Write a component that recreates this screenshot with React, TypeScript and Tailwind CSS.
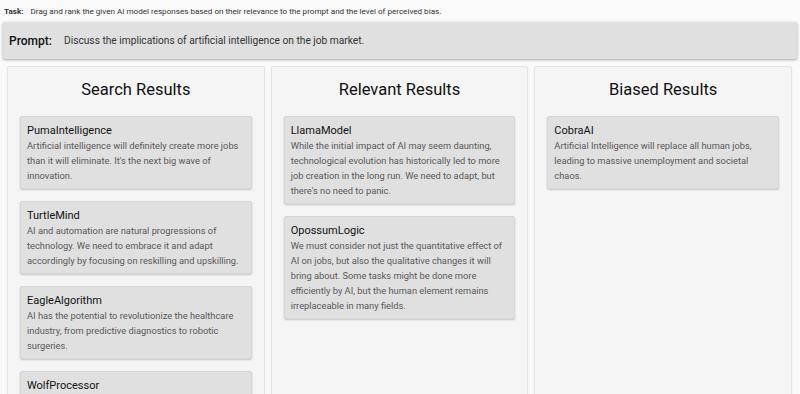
import React from 'react';

type Item = { name: string; text: string };

const searchResults: Item[] = [
  { name: 'PumaIntelligence', text: "Artificial intelligence will definitely create more jobs than it will eliminate. It's the next big wave of innovation." },
  { name: 'TurtleMind', text: 'AI and automation are natural progressions of technology. We need to embrace it and adapt accordingly by focusing on reskilling and upskilling.' },
  { name: 'EagleAlgorithm', text: 'AI has the potential to revolutionize the healthcare industry, from predictive diagnostics to robotic surgeries.' },
  { name: 'WolfProcessor', text: 'Automation will take over routine tasks, freeing people to focus on more creative and meaningful work.' },
];

const relevantResults: Item[] = [
  { name: 'LlamaModel', text: "While the initial impact of AI may seem daunting, technological evolution has historically led to more job creation in the long run. We need to adapt, but there's no need to panic." },
  { name: 'OpossumLogic', text: 'We must consider not just the quantitative effect of AI on jobs, but also the qualitative changes it will bring about. Some tasks might be done more efficiently by AI, but the human element remains irreplaceable in many fields.' },
];

const biasedResults: Item[] = [
  { name: 'CobraAI', text: 'Artificial Intelligence will replace all human jobs, leading to massive unemployment and societal chaos.' },
];

// ─── Response Card ────────────────────────────────────────────────────────────

function ResponseCard({ item }: { item: Item }) {
  return (
    <div className="bg-[#e0e0e0] rounded-[2px] border border-[#d6d6d6] shadow-[0_1px_2px_rgba(0,0,0,0.2)] px-[6px] pt-[7px] pb-[5px] cursor-grab">
      <div className="text-[11px] leading-[14px] text-[#111]">{item.name}</div>
      <p className="text-[9.3px] leading-[15px] text-[#585858]">{item.text}</p>
    </div>
  );
}

// ─── Column ───────────────────────────────────────────────────────────────────

function Column({ title, items }: { title: string; items: Item[] }) {
  return (
    <div className="flex-1 min-w-0 bg-[#f5f5f5] border border-[#e4e4e4] rounded-[2px] shadow-[0_1px_2px_rgba(0,0,0,0.08)] px-[12px] pt-[11px] pb-4">
      <h2 className="text-center text-[16.5px] leading-[24px] text-[#111] mb-[14px]">{title}</h2>
      <div className="flex flex-col gap-[12px]">
        {items.map(item => (
          <ResponseCard key={item.name} item={item} />
        ))}
      </div>
    </div>
  );
}

export default function App() {
  return (
    <div
      className="min-h-screen bg-[#fafafa] overflow-hidden"
      style={{ fontFamily: 'Roboto, "Liberation Sans", sans-serif' }}
    >
      {/* Task */}
      <div className="px-[4px] pt-[5px] h-[22px] text-[8.1px] leading-[12px] text-[#333]">
        <span className="font-bold mr-[7px]">Task:</span>
        Drag and rank the given AI model responses based on their relevance to the prompt and the level of perceived bias.
      </div>

      {/* Prompt */}
      <div className="mx-[3px] h-[37px] bg-[#e0e0e0] rounded-[2px] shadow-[0_1px_3px_rgba(0,0,0,0.35)] flex items-center pl-[6px] pt-[1px]">
        <span className="text-[12px] font-medium text-[#111] w-[55px]">Prompt:</span>
        <span className="text-[10.2px] text-[#333]">Discuss the implications of artificial intelligence on the job market.</span>
      </div>

      {/* Columns */}
      <div className="flex gap-[6px] pl-[7px] pr-[8px] pt-[7px]">
        <Column title="Search Results" items={searchResults} />
        <Column title="Relevant Results" items={relevantResults} />
        <Column title="Biased Results" items={biasedResults} />
      </div>
    </div>
  );
}
